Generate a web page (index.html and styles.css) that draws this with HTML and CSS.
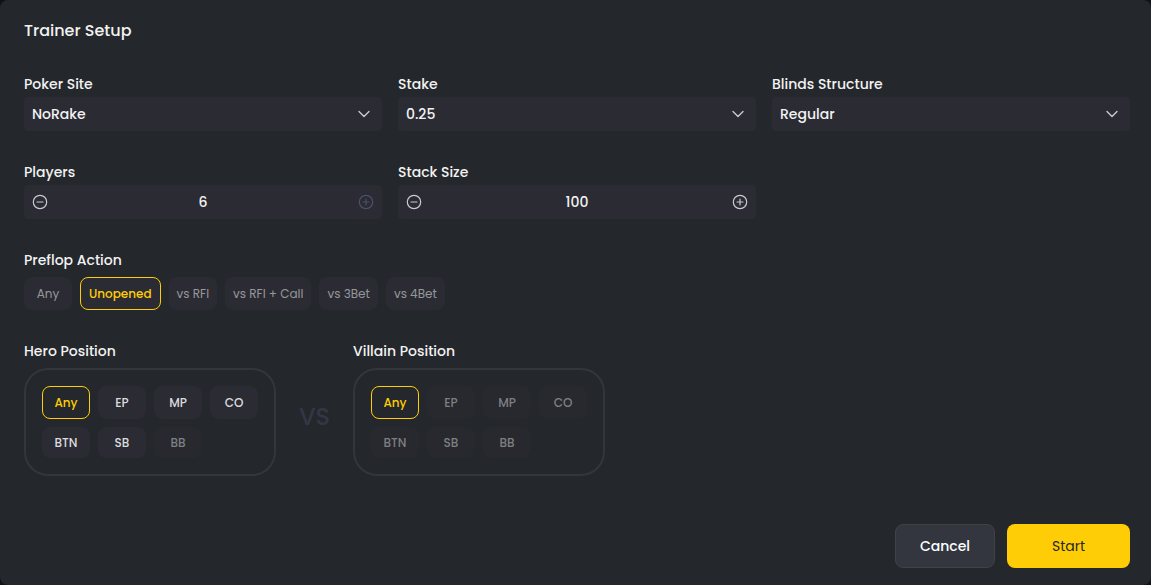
FILE: index.html
```html
<!DOCTYPE html>
<html lang="en">
  <head>
    <meta charset="UTF-8" />
    <meta name="viewport" content="width=device-width, initial-scale=1.0" />
    <title>Trainer Setup</title>
    <link rel="stylesheet" href="styles.css">
  </head>
  <body>
    <form class="modal" id="trainer-form">
      <h1 class="title">Trainer Setup</h1>

      <div class="fields">
        <div class="field">
          <label for="poker-site">Poker Site</label>
          <div class="select-box">
            <select id="poker-site">
              <option>NoRake</option>
            </select>
            <svg class="chevron" viewBox="0 0 12 8"><path d="M1 1.5l5 5 5-5" /></svg>
          </div>
        </div>
        <div class="field">
          <label for="stake">Stake</label>
          <div class="select-box">
            <select id="stake">
              <option>0.25</option>
            </select>
            <svg class="chevron" viewBox="0 0 12 8"><path d="M1 1.5l5 5 5-5" /></svg>
          </div>
        </div>
        <div class="field">
          <label for="blinds">Blinds Structure</label>
          <div class="select-box">
            <select id="blinds">
              <option>Regular</option>
            </select>
            <svg class="chevron" viewBox="0 0 12 8"><path d="M1 1.5l5 5 5-5" /></svg>
          </div>
        </div>
        <div class="field">
          <label for="players">Players</label>
          <div class="stepper">
            <button type="button" class="step" aria-label="Fewer players">
              <svg viewBox="0 0 16 16"><circle cx="8" cy="8" r="6.7" /><path d="M5 8h6" /></svg>
            </button>
            <input type="text" id="players" inputmode="numeric" value="6">
            <button type="button" class="step" aria-label="More players" disabled>
              <svg viewBox="0 0 16 16"><circle cx="8" cy="8" r="6.7" /><path d="M5 8h6M8 5v6" /></svg>
            </button>
          </div>
        </div>
        <div class="field">
          <label for="stack-size">Stack Size</label>
          <div class="stepper">
            <button type="button" class="step" aria-label="Smaller stack">
              <svg viewBox="0 0 16 16"><circle cx="8" cy="8" r="6.7" /><path d="M5 8h6" /></svg>
            </button>
            <input type="text" id="stack-size" inputmode="numeric" value="100">
            <button type="button" class="step" aria-label="Bigger stack">
              <svg viewBox="0 0 16 16"><circle cx="8" cy="8" r="6.7" /><path d="M5 8h6M8 5v6" /></svg>
            </button>
          </div>
        </div>
      </div>

      <section class="preflop">
        <h2>Preflop Action</h2>
        <div class="actions">
          <button type="button" class="chip">Any</button>
          <button type="button" class="chip selected">Unopened</button>
          <button type="button" class="chip">vs RFI</button>
          <button type="button" class="chip">vs RFI + Call</button>
          <button type="button" class="chip">vs 3Bet</button>
          <button type="button" class="chip">vs 4Bet</button>
        </div>
      </section>

      <div class="positions">
        <section>
          <h2>Hero Position</h2>
          <div class="seats">
            <button type="button" class="chip selected">Any</button>
            <button type="button" class="chip">EP</button>
            <button type="button" class="chip">MP</button>
            <button type="button" class="chip">CO</button>
            <button type="button" class="chip">BTN</button>
            <button type="button" class="chip">SB</button>
            <button type="button" class="chip" disabled>BB</button>
          </div>
        </section>
        <div class="versus">VS</div>
        <section>
          <h2>Villain Position</h2>
          <div class="seats">
            <button type="button" class="chip selected">Any</button>
            <button type="button" class="chip" disabled>EP</button>
            <button type="button" class="chip" disabled>MP</button>
            <button type="button" class="chip" disabled>CO</button>
            <button type="button" class="chip" disabled>BTN</button>
            <button type="button" class="chip" disabled>SB</button>
            <button type="button" class="chip" disabled>BB</button>
          </div>
        </section>
      </div>

      <div class="footer">
        <button type="button" class="cancel">Cancel</button>
        <button type="submit" class="start">Start</button>
      </div>
    </form>
  </body>
</html>
```
FILE: styles.css
```css
* {
  box-sizing: border-box;
}

body {
  margin: 0;
  background-color: #111214;
  font-family: Poppins, Inter, sans-serif;
  font-size: 14px;
  color: #f2f2f2;
}

button,
input,
select {
  font: inherit;
  color: inherit;
}

button {
  cursor: pointer;
}

.modal {
  display: flex;
  flex-direction: column;
  min-height: 100vh;
  padding: 19px 21px 17px 24px;
  background-color: #24272b;
  border-radius: 8px;
}

.title {
  margin: 0 0 30px;
  font-size: 16px;
  line-height: 24px;
  font-weight: 500;
}

h2,
label {
  display: block;
  margin: 0;
  font-size: 14px;
  line-height: 22px;
  font-weight: 500;
}

.fields {
  display: grid;
  grid-template-columns: repeat(3, 1fr);
  gap: 30px 16px;
}

.field label {
  margin-bottom: 2px;
}

.select-box {
  position: relative;
}

.select-box select {
  display: block;
  width: 100%;
  height: 34px;
  padding: 0 32px 0 8px;
  border: none;
  border-radius: 4px;
  background-color: #2b2b33;
  font-weight: 500;
  appearance: none;
}

.chevron {
  position: absolute;
  right: 12px;
  top: 13px;
  width: 12px;
  height: 8px;
  pointer-events: none;
}

svg {
  display: block;
  fill: none;
  stroke: #c9cad6;
  stroke-width: 1.4;
  stroke-linecap: round;
  stroke-linejoin: round;
}

.stepper {
  display: flex;
  align-items: center;
  height: 34px;
  padding: 0 8px;
  border-radius: 4px;
  background-color: #2b2b33;
}

.stepper input {
  flex: 1;
  min-width: 0;
  padding: 0;
  border: none;
  background: none;
  font-weight: 500;
  text-align: center;
}

.step {
  padding: 0;
  border: none;
  background: none;
}

.step svg {
  width: 16px;
  height: 16px;
  stroke-width: 1.2;
}

.step:disabled svg {
  stroke: #4b506a;
}

.preflop {
  margin-top: 30px;
}

.actions {
  display: flex;
  flex-wrap: wrap;
  gap: 8px;
  margin-top: 6px;
}

.chip {
  min-width: 48px;
  min-height: 31px;
  padding: 0 8px;
  border: none;
  border-radius: 8px;
  background-color: #2b2b33;
  font-size: 12px;
  line-height: 18px;
  color: #97979b;
}

.chip.selected {
  min-height: 33px;
  border: 1px solid #ffcd05;
  background-color: transparent;
  font-weight: 500;
  color: #ffcd05;
}

.actions .chip.selected {
  background-color: #2b2b33;
}

.positions {
  display: flex;
  margin-top: 30px;
}

.seats {
  display: grid;
  grid-template-columns: repeat(4, 48px);
  gap: 8px;
  margin-top: 6px;
  padding: 16px;
  border: 2px solid #34363c;
  border-radius: 24px;
}

.seats .chip {
  font-weight: 500;
  color: #dcdcde;
}

.seats .chip.selected {
  color: #ffcd05;
}

.seats .chip:disabled {
  background-color: #27292e;
  color: #7e7f83;
  cursor: default;
}

.versus {
  width: 77px;
  padding-top: 60px;
  font-size: 24px;
  line-height: 34px;
  font-weight: 500;
  text-align: center;
  color: #343645;
}

.footer {
  display: flex;
  justify-content: flex-end;
  gap: 12px;
  margin-top: auto;
  padding-top: 24px;
}

.footer button {
  height: 44px;
  border: none;
  border-radius: 8px;
}

.footer .cancel {
  min-width: 100px;
  border: 1px solid #414244;
  background-color: #34363f;
  font-weight: 500;
  color: #fff;
}

.footer .start {
  min-width: 123px;
  background-color: #ffcd05;
  color: #24272b;
}
```
